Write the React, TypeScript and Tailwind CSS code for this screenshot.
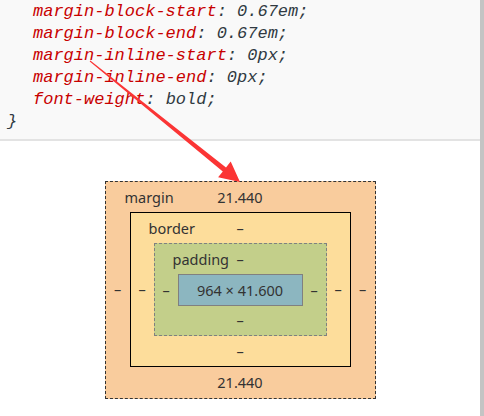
const rules = [
  ["margin-block-start", "0.67em"],
  ["margin-block-end", "0.67em"],
  ["margin-inline-start", "0px"],
  ["margin-inline-end", "0px"],
  ["font-weight", "bold"],
]

const Dash = () => <span>–</span>

export default function App() {
  return (
    <div className="relative flex w-[484px] h-[416px] overflow-hidden bg-white">
      <div className="flex-1 flex flex-col">
        {/* user agent style rule */}
        <div
          className="bg-[#f9f9f9] border-b-2 border-[#e3e3e3] pl-[7px] pt-[1px] pb-[6px] text-[17px] leading-[22px] italic"
          style={{ fontFamily: '"Liberation Mono", "DejaVu Sans Mono", monospace' }}
        >
          {rules.map(([k, v]) => (
            <div key={k} className="pl-[26px] whitespace-pre">
              <span className="text-[#c80000]">{k}</span>
              <span className="text-[#303942]">: {v};</span>
            </div>
          ))}
          <div className="text-[#303942]">{"}"}</div>
        </div>

        {/* box model */}
        <div
          className="flex justify-center pt-[40px] text-[14.5px] leading-none text-[#333]"
          style={{ fontFamily: '"Noto Sans", "Open Sans", sans-serif' }}
        >
          <div className="grid grid-cols-[24px_auto_24px] grid-rows-[30px_auto_31px] bg-[#f9cc9d] border border-dashed border-[#333]">
            <div className="col-span-3 grid grid-cols-[1fr_auto_1fr] items-center">
              <span className="pl-[19px]">margin</span>
              <span>21.440</span>
              <span />
            </div>
            <div className="flex items-center justify-center"><Dash /></div>
            <div className="grid grid-cols-[23px_auto_23px] grid-rows-[30px_auto_30px] bg-[#fddd9b] border border-black">
              <div className="col-span-3 grid grid-cols-[1fr_auto_1fr] items-center">
                <span className="pl-[18px]">border</span>
                <Dash />
                <span />
              </div>
              <div className="flex items-center justify-center"><Dash /></div>
              <div className="grid grid-cols-[23px_auto_23px] grid-rows-[30px_auto_29px] bg-[#c3cf8a] border border-dashed border-[#808080]">
                <div className="col-span-3 grid grid-cols-[1fr_auto_1fr] items-center">
                  <span className="pl-[18px]">padding</span>
                  <Dash />
                  <span />
                </div>
                <div className="flex items-center justify-center"><Dash /></div>
                <div className="w-[125px] h-[32px] flex items-center justify-center bg-[#8cb6c0] border border-[#808080]">
                  964 × 41.600
                </div>
                <div className="flex items-center justify-center"><Dash /></div>
                <div className="col-span-3 flex items-center justify-center"><Dash /></div>
              </div>
              <div className="flex items-center justify-center"><Dash /></div>
              <div className="col-span-3 flex items-center justify-center"><Dash /></div>
            </div>
            <div className="flex items-center justify-center"><Dash /></div>
            <div className="col-span-3 flex items-center justify-center">21.440</div>
          </div>
        </div>
      </div>

      {/* scrollbar edge */}
      <div className="w-[4px] bg-[#c4c4c4]" />

      {/* red annotation arrow */}
      <svg className="absolute inset-0 pointer-events-none" width="484" height="416" viewBox="0 0 484 416">
        <polygon
          points="89.7,61.4 90.3,60.6 226,167.5 230.7,161.6 240,182 218.1,177.2 222.8,171.4"
          fill="#fb3535"
        />
      </svg>
    </div>
  )
}
